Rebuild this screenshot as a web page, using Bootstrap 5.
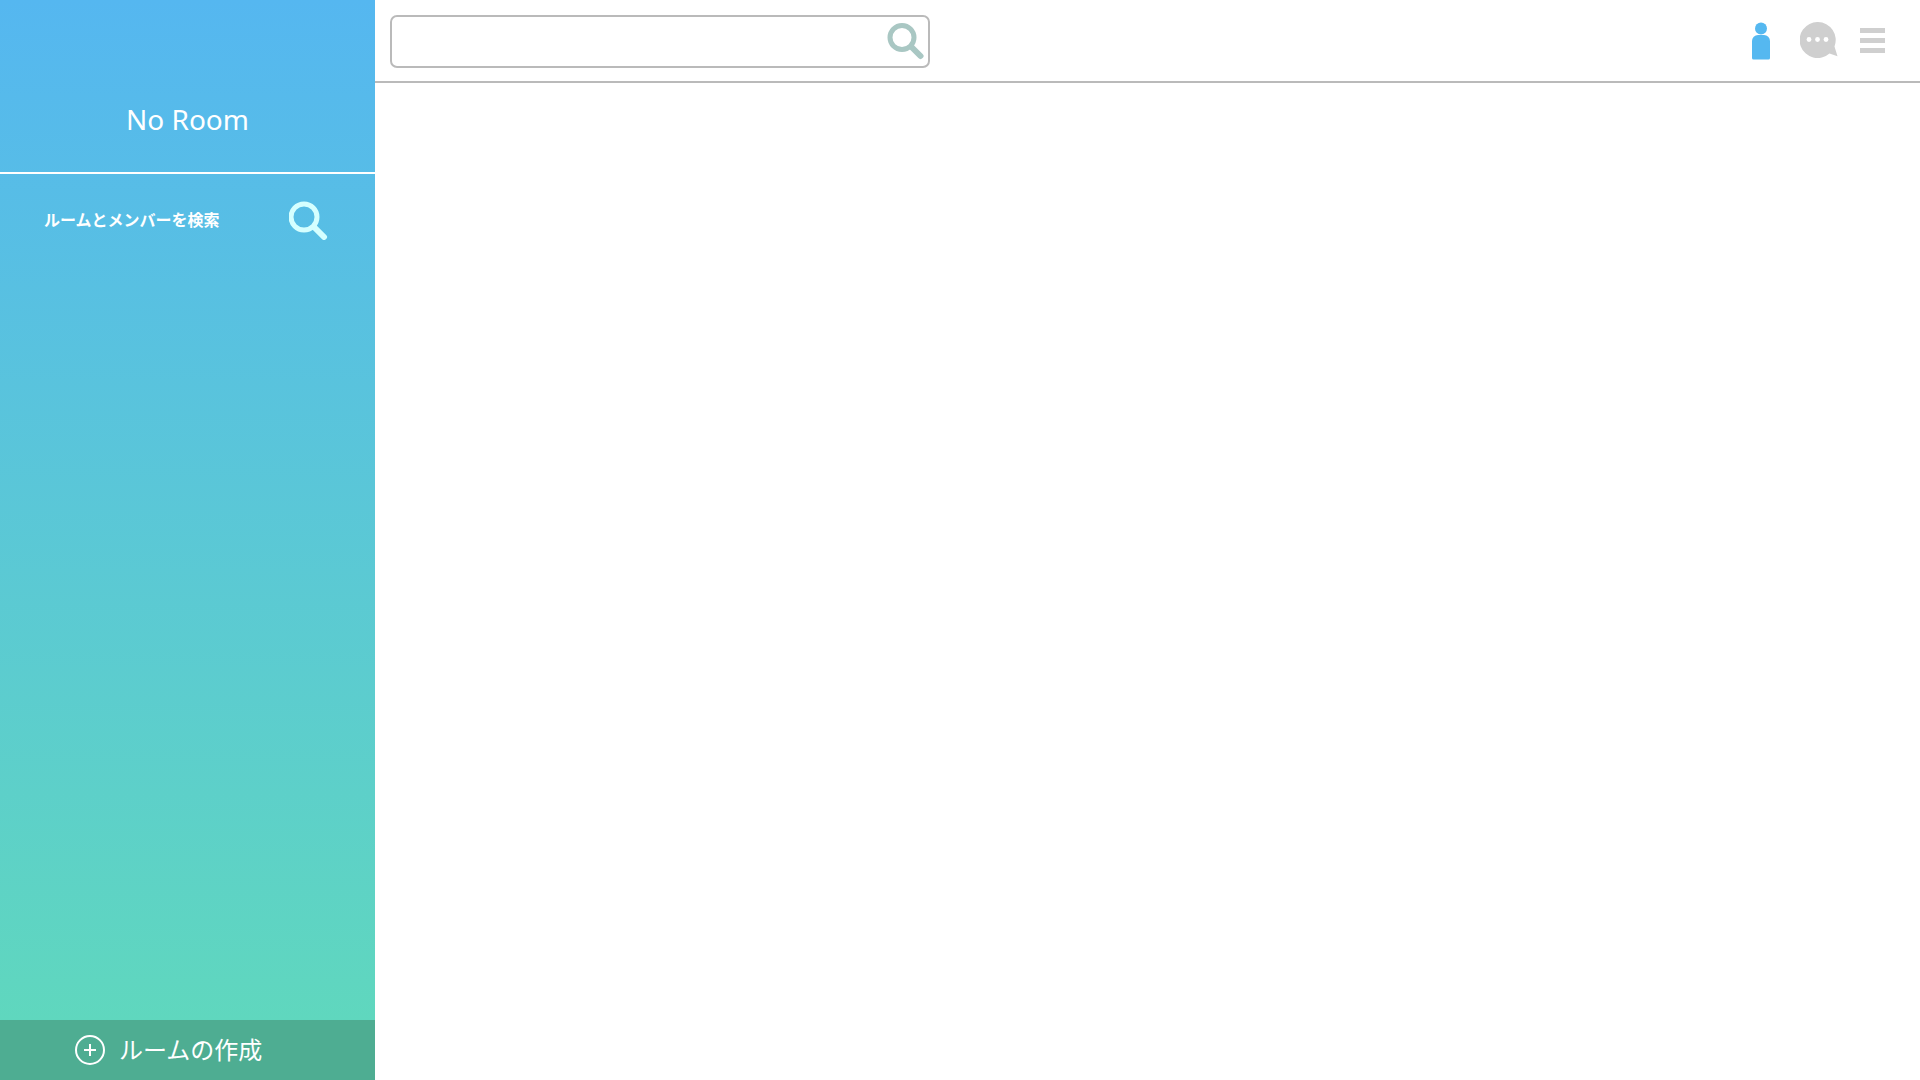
<!DOCTYPE html>
<html lang="ja">
<head>
<meta charset="utf-8">
<meta name="viewport" content="width=device-width, initial-scale=1">
<title>No Room</title>
<link href="https://cdn.jsdelivr.net/npm/bootstrap@5.3.0/dist/css/bootstrap.min.css" rel="stylesheet">
<style>
body { font-family: "Noto Sans", "Noto Sans CJK JP", sans-serif; background: #fff; }
.sidebar { width: 375px; background: linear-gradient(#55b7f0, #60d9bb); }
.room-head { height: 174px; padding-top: 99px; border-bottom: 2px solid #fff; }
.room-name { font-size: 28px; line-height: 40px; }
.member-search { padding: 26px 46px 0 44px; font-size: 16px; }
.create-room { height: 60px; padding-left: 75px; gap: 14px; font-size: 24px; background: #4ead92; }
.topbar { height: 83px; padding: 15px 35px 0 15px; border-bottom: 2px solid #bababa; }
.search-box { width: 540px; height: 53px; border: 2px solid #bababa; border-radius: 7px; padding-right: 4px; }
.search-box input { box-shadow: none !important; }
.topbar-actions { height: 51px; gap: 22px; }
svg { display: block; }
</style>
</head>
<body>
<div class="d-flex min-vh-100">
  <aside class="sidebar d-flex flex-column flex-shrink-0 text-white">
    <header class="room-head text-center">
      <h1 class="room-name fw-normal m-0">No Room</h1>
    </header>
    <div class="member-search d-flex align-items-center justify-content-between">
      <span class="fw-bold" id="member-label">ルームとメンバーを検索</span>
      <button type="button" class="btn border-0 p-0" aria-labelledby="member-label">
        <svg width="40" height="40" viewBox="0 0 40 40" fill="none" stroke="#d5ffff" stroke-width="5" stroke-linecap="round"><circle cx="15" cy="17" r="13"/><path stroke-width="6" d="M25 27l10 10"/></svg>
      </button>
    </div>
    <button type="button" class="create-room btn rounded-0 border-0 text-white mt-auto py-0 d-flex align-items-center">
      <svg width="30" height="30" viewBox="0 0 30 30" fill="none" stroke="#fff" stroke-width="2"><circle cx="15" cy="15" r="14"/><path d="M15 9v12M9 15h12"/></svg>
      <span>ルームの作成</span>
    </button>
  </aside>
  <div class="flex-grow-1">
    <nav class="topbar d-flex align-items-start justify-content-between" aria-label="メニュー">
      <form class="search-box d-flex align-items-center">
        <input type="text" class="form-control border-0 bg-transparent h-100" aria-label="検索">
        <button type="button" class="btn border-0 p-0" aria-label="検索">
          <svg width="38" height="37" viewBox="0 0 38 37" fill="none" stroke="#a9c7c3" stroke-width="5" stroke-linecap="round"><circle cx="16" cy="14.500" r="12"/><path stroke-width="6" d="M26 24.500l8.500 8.500"/></svg>
        </button>
      </form>
      <div class="topbar-actions d-flex align-items-center">
        <button type="button" class="btn border-0 p-0" aria-label="メンバー">
          <svg width="36" height="39" viewBox="0 0 36 39" fill="#55b8f0"><circle cx="19" cy="7.500" r="6"/><path d="M10 20a6 6 0 0 1 6-6h6a6 6 0 0 1 6 6v17a1.500 1.500 0 0 1-1.500 1.500h-15a1.500 1.500 0 0 1-1.500-1.500z"/></svg>
        </button>
        <button type="button" class="btn border-0 p-0" aria-label="チャット">
          <svg width="38" height="37" viewBox="0 1 38 37"><path fill="#cfcfcf" d="M18 1a18 18 0 1 0 11.500 31.500L37.500 35.200L34.500 25.500A18 18 0 0 0 18 1z"/><g fill="#fff"><circle cx="9" cy="18.500" r="2.400"/><circle cx="17.500" cy="18.500" r="2.400"/><circle cx="26" cy="18.500" r="2.400"/></g></svg>
        </button>
        <button type="button" class="btn border-0 p-0" aria-label="メニューを開く">
          <svg width="25" height="25" viewBox="0 0 25 25" fill="#cfcfcf"><path d="M0 0h25v5H0zM0 10h25v5H0zM0 20h25v5H0z"/></svg>
        </button>
      </div>
    </nav>
    <main></main>
  </div>
</div>
<script src="https://cdn.jsdelivr.net/npm/bootstrap@5.3.0/dist/js/bootstrap.bundle.min.js"></script>
</body>
</html>
